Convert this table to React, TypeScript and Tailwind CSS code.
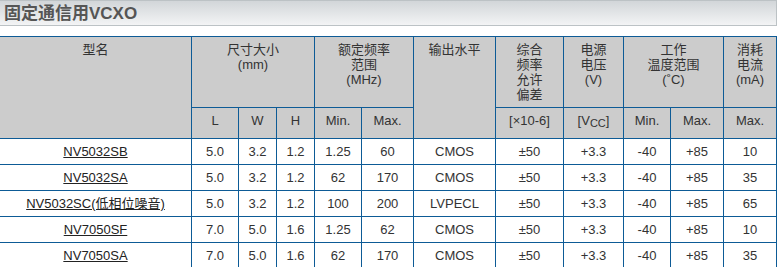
const rows = [
  { name: "NV5032SB", l: "5.0", w: "3.2", h: "1.2", min: "1.25", max: "60", out: "CMOS", ppm: "±50", v: "+3.3", tmin: "-40", tmax: "+85", ma: "10" },
  { name: "NV5032SA", l: "5.0", w: "3.2", h: "1.2", min: "62", max: "170", out: "CMOS", ppm: "±50", v: "+3.3", tmin: "-40", tmax: "+85", ma: "35" },
  { name: "NV5032SC(低相位噪音)", l: "5.0", w: "3.2", h: "1.2", min: "100", max: "200", out: "LVPECL", ppm: "±50", v: "+3.3", tmin: "-40", tmax: "+85", ma: "65" },
  { name: "NV7050SF", l: "7.0", w: "5.0", h: "1.6", min: "1.25", max: "62", out: "CMOS", ppm: "±50", v: "+3.3", tmin: "-40", tmax: "+85", ma: "10" },
  { name: "NV7050SA", l: "7.0", w: "5.0", h: "1.6", min: "62", max: "170", out: "CMOS", ppm: "±50", v: "+3.3", tmin: "-40", tmax: "+85", ma: "35" },
];

const th = "border-r border-b border-[#0d5b96] bg-[#cccccc] font-normal text-center align-top pt-[5px] px-0";
const td = "border-r border-b border-[#0d5b96] text-center align-middle p-0";

export default function App() {
  return (
    <div className="w-[778px] bg-white text-[13px] leading-[15px] text-[#333]" style={{ fontFamily: '"Liberation Sans", "Noto Sans CJK SC", sans-serif' }}>
      <div className="h-[26px] w-[777px] border-y border-r border-[#bcc2c5] bg-linear-to-b from-[#d2d6d9] to-[#f3f4f5] pl-[4px] flex items-center">
        <h2 className="text-[17px] font-bold text-[#555] leading-none">固定通信用VCXO</h2>
      </div>

      <table className="mt-[10px] w-[777px] table-fixed border-separate border-spacing-0 border-t border-[#0d5b96]">
        <colgroup>
          <col className="w-[192px]" />
          <col className="w-[47px]" />
          <col className="w-[38px]" />
          <col className="w-[38px]" />
          <col className="w-[47px]" />
          <col className="w-[52px]" />
          <col className="w-[82px]" />
          <col className="w-[68px]" />
          <col className="w-[60px]" />
          <col className="w-[47px]" />
          <col className="w-[53px]" />
          <col className="w-[53px]" />
        </colgroup>
        <thead>
          <tr className="h-[71px]">
            <th rowSpan={2} className={th}>型名</th>
            <th colSpan={3} className={th}>尺寸大小<br />(mm)</th>
            <th colSpan={2} className={th}>额定频率<br />范围<br />(MHz)</th>
            <th rowSpan={2} className={th}>输出水平</th>
            <th className={th}>综合<br />频率<br />允许<br />偏差</th>
            <th className={th}>电源<br />电压<br />(V)</th>
            <th colSpan={2} className={th}>工作<br />温度范围<br />(˚C)</th>
            <th className={th}>消耗<br />电流<br />(mA)</th>
          </tr>
          <tr className="h-[31px]">
            <th className={th}>L</th>
            <th className={th}>W</th>
            <th className={th}>H</th>
            <th className={th}>Min.</th>
            <th className={th}>Max.</th>
            <th className={th}>[×10-6]</th>
            <th className={th}>
              [V<span className="text-[11px] relative top-[2px]">CC</span>]
            </th>
            <th className={th}>Min.</th>
            <th className={th}>Max.</th>
            <th className={th}>Max.</th>
          </tr>
        </thead>
        <tbody>
          {rows.map((r) => (
            <tr key={r.name} className="h-[26px]">
              <td className={td}>
                <a href="#" className="underline text-[#222]">{r.name}</a>
              </td>
              <td className={td}>{r.l}</td>
              <td className={td}>{r.w}</td>
              <td className={td}>{r.h}</td>
              <td className={td}>{r.min}</td>
              <td className={td}>{r.max}</td>
              <td className={td}>{r.out}</td>
              <td className={td}>{r.ppm}</td>
              <td className={td}>{r.v}</td>
              <td className={td}>{r.tmin}</td>
              <td className={td}>{r.tmax}</td>
              <td className={td}>{r.ma}</td>
            </tr>
          ))}
        </tbody>
      </table>
    </div>
  );
}
